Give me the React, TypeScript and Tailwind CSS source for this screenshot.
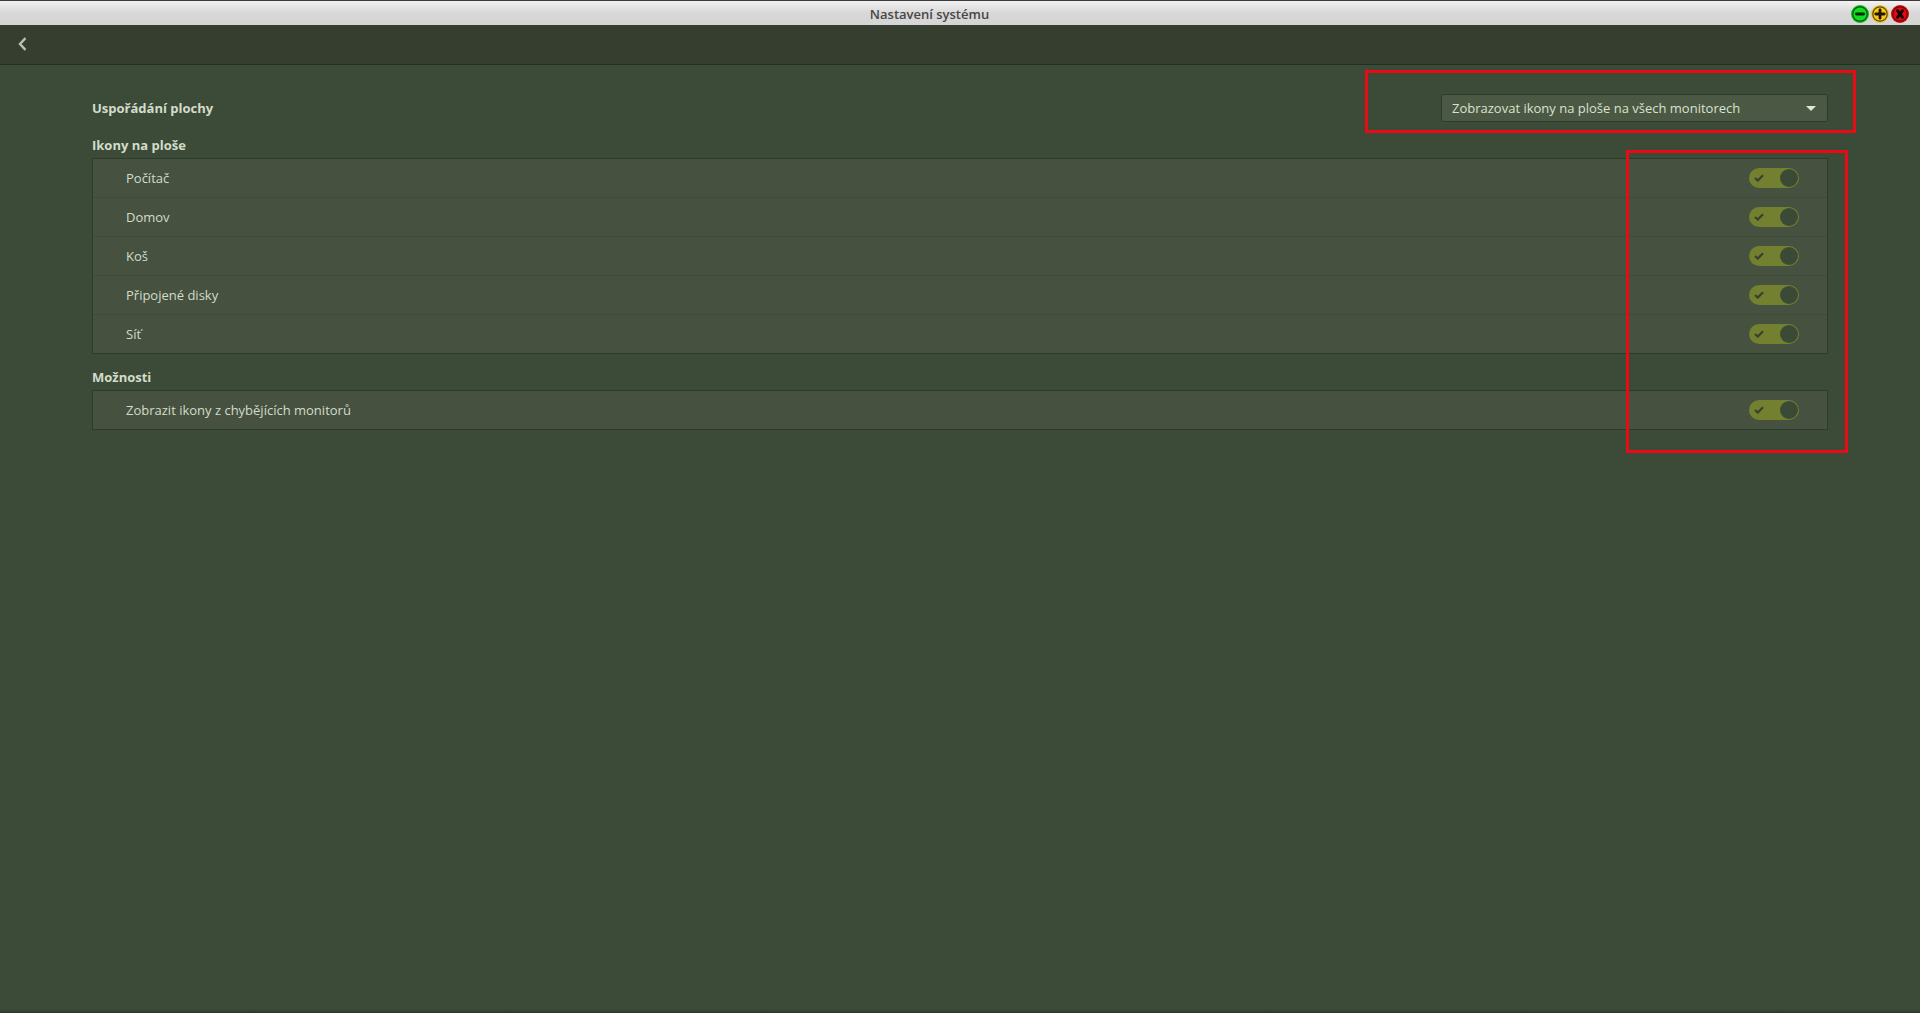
import React, { useState } from 'react';

interface SwitchRow {
    id: string;
    label: string;
}

const desktopIcons: SwitchRow[] = [
    { id: 'computer', label: 'Počítač' },
    { id: 'home', label: 'Domov' },
    { id: 'trash', label: 'Koš' },
    { id: 'volumes', label: 'Připojené disky' },
    { id: 'network', label: 'Síť' },
];

const options: SwitchRow[] = [
    { id: 'orphaned', label: 'Zobrazit ikony z chybějících monitorů' },
];

const TitleBar = () => (
    <header className="flex h-[25px] items-center border-t border-[#3d3a3d] bg-linear-to-b from-[#f2f2f2] via-[#d8d8d8] to-[#d5d5d5] pt-px pr-[11px] pl-2">
        <h1 className="flex-1 text-center text-[13px] leading-5 font-semibold text-[#474747]">Nastavení systému</h1>
        <div className="flex gap-[2px]">
            <button type="button" aria-label="Minimalizovat" className="size-[18px]">
                <svg viewBox="0 0 18 18" className="size-full">
                    <circle cx="9" cy="9" r="9" fill="#0fb81c" />
                    <circle cx="9" cy="9" r="7.2" fill="#12dd22" stroke="#075a0d" strokeWidth="1.2" />
                    <path d="M5.4 9h7.2" stroke="#04240a" strokeWidth="2.8" strokeLinecap="round" />
                </svg>
            </button>
            <button type="button" aria-label="Maximalizovat" className="size-[18px]">
                <svg viewBox="0 0 18 18" className="size-full">
                    <circle cx="9" cy="9" r="9" fill="#efc42e" />
                    <circle cx="9" cy="9" r="7.2" fill="#f8c61c" stroke="#5b4706" strokeWidth="1.2" />
                    <path d="M4.8 9h8.4M9 4.8v8.4" stroke="#1d1602" strokeWidth="2.8" strokeLinecap="round" />
                </svg>
            </button>
            <button type="button" aria-label="Zavřít" className="size-[18px]">
                <svg viewBox="0 0 18 18" className="size-full">
                    <circle cx="9" cy="9" r="9" fill="#cf0a0e" />
                    <circle cx="9" cy="9" r="7.2" fill="#d90d12" stroke="#7c0406" strokeWidth="1.2" />
                    <path d="M6.6 5.8l4.8 6.4M11.4 5.8l-4.8 6.4" stroke="#180102" strokeWidth="3" strokeLinecap="round" />
                </svg>
            </button>
        </div>
    </header>
);

const SwitchList = ({ title, rows }: { title: string; rows: SwitchRow[] }) => {
    const [disabledIds, setDisabledIds] = useState<string[]>([]);

    const toggle = (id: string) => {
        setDisabledIds(disabledIds.includes(id) ? disabledIds.filter(item => item !== id) : [...disabledIds, id]);
    };

    return (
        <section className="pt-3">
            <h2 className="mb-[2px] text-[13px] leading-[22px] font-bold">{title}</h2>
            <ul className="divide-y divide-[#3f4a39] border border-[#2e3a2b] bg-[#465140]">
                {rows.map(row => (
                    <li key={row.id}>
                        <label className="flex h-[38px] items-center justify-between pr-7 pl-[33px]">
                            <span className="pt-[2px]">{row.label}</span>
                            <span className="relative flex h-5 w-[50px]">
                                <input
                                    type="checkbox"
                                    role="switch"
                                    checked={!disabledIds.includes(row.id)}
                                    onChange={() => toggle(row.id)}
                                    className="peer size-full appearance-none rounded-full bg-[#39442f] checked:bg-[#73802f]"
                                />
                                <svg
                                    viewBox="0 0 10 8"
                                    className="pointer-events-none absolute top-[6px] left-[5px] hidden h-2 w-[10px] peer-checked:block"
                                >
                                    <path d="M1 4l2.8 2.6L9 1.2" fill="none" stroke="#36422f" strokeWidth="2.2" />
                                </svg>
                                <span className="pointer-events-none absolute top-px left-px size-[18px] rounded-full bg-[#3b4a37] peer-checked:right-px peer-checked:left-auto" />
                            </span>
                        </label>
                    </li>
                ))}
            </ul>
        </section>
    );
};

const App = () => {
    return (
        <div className="flex min-h-screen flex-col bg-[#3c4b37] font-['Open_Sans','Noto_Sans',sans-serif] text-[13px] text-[#d3dccb]">
            <TitleBar />

            <nav className="flex h-10 items-center border-b border-[#232f20] bg-[#353e2f] px-4 pb-[2px]">
                <button type="button" aria-label="Zpět" className="flex size-[14px] items-center justify-center">
                    <svg viewBox="0 0 14 14" className="size-full">
                        <path d="M9.5 1.2L4 7l5.5 5.8" fill="none" stroke="#b9c2b2" strokeWidth="2.4" />
                    </svg>
                </button>
            </nav>

            <main className="flex-1 px-[92px] pt-[29px]">
                <div className="relative flex items-center justify-between">
                    <label htmlFor="layout" className="pt-[2px] font-bold">Uspořádání plochy</label>
                    <div className="relative">
                        <select
                            id="layout"
                            className="block h-7 w-[387px] appearance-none rounded-[3px] border border-[#2e3a2b] bg-[#4b5843] px-[10px] pt-[2px] text-[13px] text-[#d9e2d0]"
                        >
                            <option>Zobrazovat ikony na ploše na všech monitorech</option>
                        </select>
                        <svg viewBox="0 0 10 5" className="pointer-events-none absolute top-3 right-3 h-[5px] w-[10px]">
                            <path d="M0 0h10L5 5z" fill="#dfe8d6" />
                        </svg>
                    </div>
                    <div className="pointer-events-none absolute -top-6 -right-7 h-[63px] w-[491px] border-3 border-[#e80a14]" />
                </div>

                <div className="relative">
                    <SwitchList title="Ikony na ploše" rows={desktopIcons} />
                    <SwitchList title="Možnosti" rows={options} />
                    <div className="pointer-events-none absolute top-7 -right-5 -bottom-[23px] w-[222px] border-3 border-[#e80a14]" />
                </div>
            </main>

            <footer className="h-1 bg-linear-to-b from-[#3c4b37] to-[#2c3628]" />
        </div>
    );
};

export default App;
